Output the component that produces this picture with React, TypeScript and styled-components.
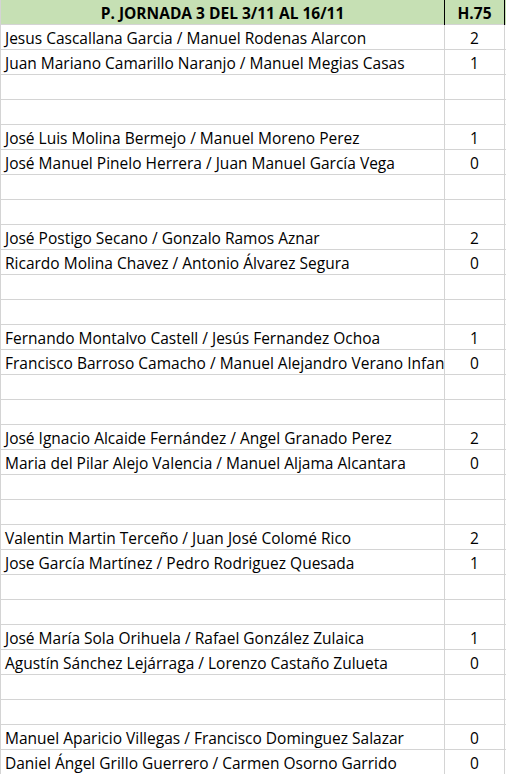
import styled, { createGlobalStyle } from 'styled-components';

const GlobalStyle = createGlobalStyle`
  html, body {
    margin: 0;
    padding: 0;
    background: #ffffff;
  }
  body {
    font-family: 'Open Sans', 'Liberation Sans', sans-serif;
    color: #000000;
  }
`;

const Sheet = styled.div`
  width: 506px;
  height: 774px;
  overflow: hidden;
  border-left: 1px solid #d4d4d4;
  box-sizing: border-box;
`;

const Row = styled.div<{ $head?: boolean }>`
  display: grid;
  grid-template-columns: 444px 60px;
  height: 25px;
  box-sizing: border-box;
  border-bottom: 1px solid #d4d4d4;
  background: ${(p) => (p.$head ? '#c6e0b4' : '#ffffff')};
  font-weight: ${(p) => (p.$head ? 700 : 400)};
  font-size: 15.5px;
  line-height: 26px;
`;

const NameCell = styled.div<{ $head?: boolean }>`
  padding-left: ${(p) => (p.$head ? '0' : '4px')};
  text-align: ${(p) => (p.$head ? 'center' : 'left')};
  white-space: nowrap;
  overflow: hidden;
  border-right: 1px solid ${(p) => (p.$head ? '#000000' : '#d4d4d4')};
`;

const ScoreCell = styled.div<{ $head?: boolean }>`
  text-align: center;
  border-right: 1px solid ${(p) => (p.$head ? '#000000' : '#d4d4d4')};
`;

type Match = [string, number] | null;

const matches: Match[] = [
  ['Jesus Cascallana Garcia / Manuel Rodenas Alarcon', 2],
  ['Juan Mariano Camarillo Naranjo / Manuel Megias Casas', 1],
  null,
  null,
  ['José Luis Molina Bermejo / Manuel Moreno Perez', 1],
  ['José Manuel Pinelo Herrera / Juan Manuel García Vega', 0],
  null,
  null,
  ['José Postigo Secano / Gonzalo Ramos Aznar', 2],
  ['Ricardo Molina Chavez / Antonio Álvarez Segura', 0],
  null,
  null,
  ['Fernando Montalvo Castell / Jesús Fernandez Ochoa', 1],
  ['Francisco Barroso Camacho / Manuel Alejandro Verano Infante', 0],
  null,
  null,
  ['José Ignacio Alcaide Fernández / Angel Granado Perez', 2],
  ['Maria del Pilar Alejo Valencia / Manuel Aljama Alcantara', 0],
  null,
  null,
  ['Valentin Martin Terceño / Juan José Colomé Rico', 2],
  ['Jose García Martínez / Pedro Rodriguez Quesada', 1],
  null,
  null,
  ['José María Sola Orihuela / Rafael González Zulaica', 1],
  ['Agustín Sánchez Lejárraga / Lorenzo Castaño Zulueta', 0],
  null,
  null,
  ['Manuel Aparicio Villegas / Francisco Dominguez Salazar', 0],
  ['Daniel Ángel Grillo Guerrero / Carmen Osorno Garrido', 0],
];

export default function App() {
  return (
    <>
      <GlobalStyle />
      <Sheet>
        <Row $head>
          <NameCell $head>P. JORNADA 3 DEL 3/11 AL 16/11</NameCell>
          <ScoreCell $head>H.75</ScoreCell>
        </Row>
        {matches.map((m, i) => (
          <Row key={i}>
            <NameCell>{m ? m[0] : ''}</NameCell>
            <ScoreCell>{m ? m[1] : ''}</ScoreCell>
          </Row>
        ))}
      </Sheet>
    </>
  );
}
